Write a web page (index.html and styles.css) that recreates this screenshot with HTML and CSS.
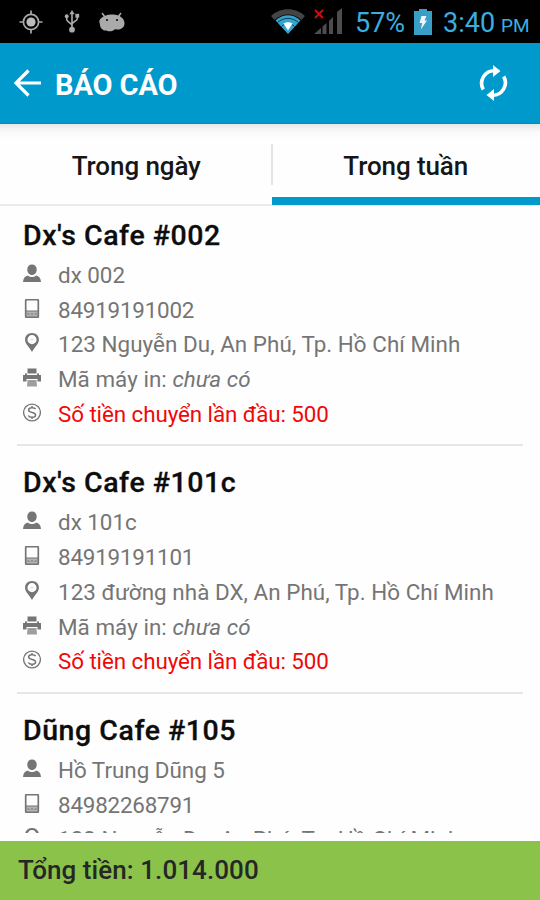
FILE: index.html
```
<!DOCTYPE html>
<html lang="vi">
<head>
<meta charset="utf-8">
<title>Báo cáo</title>
<link rel="stylesheet" href="styles.css">
</head>
<body>
<svg class="defs" aria-hidden="true">
  <symbol id="user" viewBox="0 0 18 18"><path d="M9 0C6 0 4.300 2 4.300 5c0 3.200 2 5.500 4.700 5.500s4.700-2.300 4.700-5.500C13.700 2 12 0 9 0zM5 11c-3 .8-4.800 2.700-5 6.500h18c-.2-3.800-2-5.700-5-6.500-1 1-2.400 1.500-4 1.500S6 12 5 11z"/></symbol>
  <symbol id="phone" viewBox="0 0 18 19"><rect x="2.700" y=".7" width="12.600" height="17.600" rx=".8" fill="none" stroke="currentColor" stroke-width="1.700"/><path d="M3 12h12v6H3z" opacity=".55"/><path d="M3 11.500h12v1H3zM4.500 14.500h2v1h-2zM8 14.500h2v1H8zM11.500 14.500h2v1h-2z"/></symbol>
  <symbol id="pin" viewBox="0 0 18 20"><path fill-rule="evenodd" d="M9 0C4.600 0 1.700 3 1.700 7c0 4.500 4.500 7.500 7.300 13 2.800-5.500 7.300-8.500 7.300-13C16.300 3 13.400 0 9 0zm0 2.200A4.800 4.800 0 1 1 9 11.800 4.800 4.800 0 0 1 9 2.200z"/><circle cx="9" cy="7" r=".7" opacity=".6"/></symbol>
  <symbol id="printer" viewBox="0 0 18 18"><path d="M4.500 0h9v5h-9zM0 6.500h2V5h2v1.500h10V5h2v1.500h2V13h-3.500v-2.500h-11V13H0z"/><path d="M4.500 11.500h9L14 18H4z" opacity=".7"/></symbol>
  <symbol id="coin" viewBox="0 0 18 18"><g fill="none" stroke="currentColor"><circle cx="9" cy="9" r="8.400" stroke-width="1.300"/><path d="M12.600 5.700C11.500 3.500 5.600 3.600 5.600 6.500c0 3.200 7 1.700 7 5 0 3-6 3.100-7.300.5M9 2.500v2M9 13.500v2" stroke-width="1.500"/></g></symbol>
</svg>
<div class="screen">
  <header class="status">
    <svg class="gps" viewBox="0 0 24 24"><circle cx="12" cy="12" r="7.600" fill="none" stroke="#aaa" stroke-width="1.700"/><circle cx="12" cy="12" r="4.600" fill="#bbb"/><path d="M12 .5v4M12 19.500v4M.5 12h4M19.500 12h4" stroke="#aaa" stroke-width="1.700"/></svg>
    <svg class="usb" viewBox="0 0 16 24"><g fill="none" stroke="#aaa" stroke-width="1.700"><path d="M8 3v17M2.500 7v3c0 3 5.500 3 5.500 6.500M13.500 6v3c0 3-5.500 3-5.500 6"/></g><g fill="#aaa"><path d="M8 0l2.800 4.500H5.200z"/><circle cx="8" cy="20.500" r="3"/><circle cx="2.500" cy="6.500" r="2"/><path d="M11.500 4h4v4h-4z"/></g></svg>
    <svg class="droid" viewBox="0 0 26 20"><path d="M3 1l3 4M22 1l-3 4" stroke="#aaa" stroke-width="1.500"/><path d="M7 3.500C10 2.300 16 2.300 19 3.500c4 1.500 6.500 4 6.500 8 0 3.500-3 6-6.500 6-1 0-2.500 0-3.200-.2C14 19.500 10 20 7.500 18.500 4 19 .5 15.500 1 12-.2 10 .3 7 2.500 6c1-1.300 2.600-2 4.500-2.500z" fill="#aaa"/><circle cx="8" cy="8" r="1"/><circle cx="18" cy="8" r="1"/></svg>
    <span class="grow"></span>
    <svg class="wifi" viewBox="0 0 34 26"><path d="M0 7C9-2 25-2 34 7l-3.500 4C23 3.500 11 3.500 3.500 11z" fill="#444"/><path d="M4.500 11.500C12 4.500 22 4.500 29.500 11.500L17 25z" fill="#33a5d0"/><path d="M6.500 13.500c6-5.500 15-5.500 21 0M10.500 17.500c4-4 9-4 13 0" fill="none" stroke="#123c4d" stroke-width="1"/><path d="M12.500 14.500c3-1.700 6-1.700 9 0L17 21.500z" fill="#fff"/></svg>
    <svg class="signal" viewBox="0 0 28 27"><path d="M0 26l7-6v6zM8.500 18.500l4-3.500v11h-4zM15 13l4-4v17h-4zM23 4l5-4v26h-5z" fill="#4d4d4d"/><path d="M1 2l8 8M9 2l-8 8" stroke="#d00b0b" stroke-width="2"/></svg>
    <span class="percent">57%</span>
    <svg class="battery" viewBox="0 0 18 26"><path d="M5 0h8v2h5v24H0V2h5z" fill="#3a9fc7"/><path d="M7.500 7h5l-2 4.500h2.500L6.800 20.500 8.200 14H5.500z" fill="#eef8fc"/></svg>
    <span class="time">3:40</span><span class="pm">PM</span>
  </header>
  <div class="appbar">
    <svg class="back" viewBox="0 0 28 28"><path d="M14.500 1.500L2 14l12.500 12.500M2.500 14H27" fill="none" stroke="#fff" stroke-width="3.200"/></svg>
    <h1>BÁO CÁO</h1>
    <svg class="sync" viewBox="0 0 28 36"><g fill="none" stroke="#fff" stroke-width="3.600"><path d="M3.800 24.500A12.500 12.500 0 0 1 15 5.800"/><path d="M24.200 11.500A12.500 12.500 0 0 1 13 30.200"/></g><path d="M13.500 0l7.500 6-7.500 6zM14.500 24L7 30l7.500 6z" fill="#fff"/></svg>
  </div>
  <nav class="tabs"><div class="tab"><span class="day">Trong ngày</span></div><div class="tab active"><span class="week">Trong tuần</span></div></nav>
  <main class="list">
    <article>
      <h2>Dx's Cafe #002</h2>
      <p><svg><use href="#user"/></svg><span>dx 002</span></p>
      <p><svg><use href="#phone"/></svg><span class="number">84919191002</span></p>
      <p><svg><use href="#pin"/></svg><span class="address">123 Nguyễn Du, An Phú, Tp. Hồ Chí Minh</span></p>
      <p><svg><use href="#printer"/></svg><span class="address">Mã máy in: <i>chưa có</i></span></p>
      <p><svg><use href="#coin"/></svg><span class="money">Số tiền chuyển lần đầu: 500</span></p>
    </article>
    <article>
      <h2>Dx's Cafe #101c</h2>
      <p><svg><use href="#user"/></svg><span>dx 101c</span></p>
      <p><svg><use href="#phone"/></svg><span class="number">84919191101</span></p>
      <p><svg><use href="#pin"/></svg><span class="address">123 đường nhà DX, An Phú, Tp. Hồ Chí Minh</span></p>
      <p><svg><use href="#printer"/></svg><span class="address">Mã máy in: <i>chưa có</i></span></p>
      <p><svg><use href="#coin"/></svg><span class="money">Số tiền chuyển lần đầu: 500</span></p>
    </article>
    <article>
      <h2>Dũng Cafe #105</h2>
      <p><svg><use href="#user"/></svg><span>Hồ Trung Dũng 5</span></p>
      <p><svg><use href="#phone"/></svg><span class="number">84982268791</span></p>
      <p><svg><use href="#pin"/></svg><span class="address">123 Nguyễn Du, An Phú, Tp. Hồ Chí Minh</span></p>
    </article>
  </main>
  <footer>Tổng tiền: 1.014.000</footer>
</div>
</body>
</html>
```
FILE: styles.css
```
* { box-sizing: border-box; }
body, h1, h2, p { margin: 0; }
body { font-family: Roboto, "Liberation Sans", sans-serif; background: #fefefe; }
.defs { display: none; }
.screen { width: 540px; height: 900px; display: flex; flex-direction: column; overflow: hidden; }

.status { height: 43px; flex: none; background: #000; display: flex; align-items: center; padding: 0 11px 0 19px; color: #38afe0; }
.gps { width: 24px; height: 24px; }
.usb { width: 16px; height: 23px; margin-left: 21px; }
.droid { width: 26px; height: 20px; margin-left: 19px; }
.grow { flex: 1; }
.wifi { width: 34px; height: 26px; margin-right: 9px; }
.signal { width: 28px; height: 27px; margin-right: 14px; }
.percent { font-size: 27px; width: 50px; white-space: nowrap; margin: 2px 0 0 -1px; }
.battery { width: 18px; height: 26px; margin: 0 11px 0 9px; }
.time { font-size: 27px; width: 55px; white-space: nowrap; margin-top: 2px; }
.pm { font-size: 19px; width: 28px; margin: 8px 0 0 3px; }

.appbar { height: 81px; flex: none; background: #0099cc; border-bottom: 1px solid #0789b6; display: flex; align-items: center; padding: 0 32px 0 14px; color: #fff; }
.back { width: 28px; height: 28px; }
.appbar h1 { flex: 1; margin: 3px 0 0 13px; font-size: 29px; font-weight: 700; letter-spacing: -.1px; }
.sync { width: 29px; height: 36px; }

.tabs { height: 82px; flex: none; display: flex; background: linear-gradient(#e6e6e6, #fafafa 8px, #fefefe 15px); border-bottom: 2px solid #ebebeb; }
.tab { flex: 1; display: flex; align-items: center; justify-content: center; font-size: 26px; font-weight: 500; letter-spacing: -.1px; color: #161616; padding: 4px 0 0 2px; white-space: nowrap; }
.tab.active { border-bottom: 8px solid #0099cc; margin: 0 0 -1px 1px; padding: 11px 0 0; position: relative; }
.tab.active::before { content: ""; position: absolute; left: -1px; top: 20px; width: 2px; height: 41px; background: #e4e4e4; }

.list { height: 627px; flex: none; overflow: hidden; }
article { height: 247.600px; margin: 0 17px; padding: 19px 0 0 6px; border-bottom: 2px solid #e6e6e6; }
article:first-child { margin-top: -7.200px; }
h2 { height: 36px; line-height: 36px; margin-bottom: 3.500px; font-size: 28.500px; font-weight: 500; letter-spacing: .55px; -webkit-text-stroke: .3px #0d0d0d; color: #0d0d0d; white-space: nowrap; }
article p { height: 34.800px; display: flex; align-items: center; font-size: 22.400px; color: #757575; white-space: nowrap; }
article p svg { width: 18px; height: 19px; margin: -3px 17px 0 0; flex: none; overflow: visible; fill: #757575; }
.number { letter-spacing: -.2px; }
.address { letter-spacing: .05px; }
.money { color: #f00808; letter-spacing: -.08px; }

footer { height: 59px; flex: none; margin-top: 8px; padding-left: 18px; background: #8bc34a; color: #262626; font-size: 26px; font-weight: 500; line-height: 59px; letter-spacing: .07px; }
```
